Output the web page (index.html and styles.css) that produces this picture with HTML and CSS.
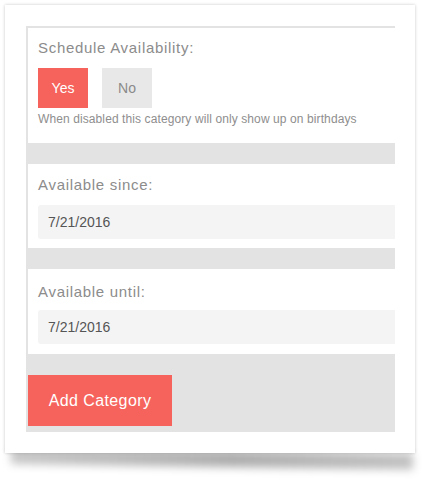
FILE: index.html
```html
<!DOCTYPE html>
<html>
<head>
<meta charset="utf-8">
<link rel="stylesheet" href="styles.css">
</head>
<body>
<div class="stage">
  <div class="card">
    <div class="form">
      <section class="block block-schedule">
        <div class="label">Schedule Availability:</div>
        <div class="toggle">
          <button class="opt opt-on">Yes</button>
          <button class="opt opt-off">No</button>
        </div>
        <div class="hint">When disabled this category will only show up on birthdays</div>
      </section>
      <div class="gap"></div>
      <section class="block block-date">
        <div class="label">Available since:</div>
        <div class="input">7/21/2016</div>
      </section>
      <div class="gap"></div>
      <section class="block block-date block-last">
        <div class="label">Available until:</div>
        <div class="input">7/21/2016</div>
      </section>
      <div class="actions">
        <button class="submit">Add Category</button>
      </div>
    </div>
  </div>
</div>
</body>
</html>
```

FILE: styles.css
```css
html, body {
  margin: 0;
  padding: 0;
  background: #ffffff;
}
body {
  font-family: "Liberation Sans", Arial, sans-serif;
  width: 429px;
  height: 483px;
  overflow: hidden;
}
.stage {
  position: relative;
  z-index: 0;
  padding: 5px 0 0 5px;
}
.card {
  position: relative;
  width: 410px;
  height: 448px;
  box-sizing: border-box;
  background: #ffffff;
  padding: 21px 20px 0 21px;
  box-shadow: 0 0 3px rgba(0,0,0,0.22);
}
.card::after {
  content: "";
  position: absolute;
  left: 6px;
  right: 2px;
  bottom: -11px;
  height: 16px;
  background: linear-gradient(90deg, rgba(0,0,0,0.22), rgba(0,0,0,0.32) 55%, rgba(0,0,0,0.24));
  filter: blur(4px);
  transform: skewY(0.8deg);
  transform-origin: left top;
  z-index: -1;
}
.form {
  background: #e3e3e3;
  padding: 2px 0 6px 2px;
}
.block {
  background: #ffffff;
  padding: 10px 0 16px 10px;
}
.label {
  font-size: 15px;
  line-height: 20px;
  color: #8c8c8c;
  letter-spacing: 0.7px;
}
.toggle {
  display: flex;
  gap: 14px;
  margin-top: 10px;
}
.opt {
  width: 50px;
  height: 40px;
  border: 0;
  padding: 0;
  font-family: inherit;
  font-size: 14px;
}
.opt-on {
  background: #f6635c;
  color: #ffffff;
}
.opt-off {
  background: #e8e8e8;
  color: #8a8a8a;
}
.hint {
  margin-top: 3px;
  font-size: 12px;
  line-height: 16px;
  color: #8e8e8e;
  letter-spacing: 0.1px;
}
.gap {
  height: 21px;
}
.block-date {
  padding: 11px 0 9px 10px;
}
.block-last {
  padding: 13px 0 10px 10px;
}
.input {
  margin-top: 10px;
  height: 34px;
  box-sizing: border-box;
  background: #f4f4f4;
  border-radius: 3px 0 0 3px;
  padding-left: 10px;
  font-size: 14px;
  line-height: 34px;
  color: #555555;
}
.block-last .input {
  margin-top: 8px;
}
.actions {
  padding-top: 21px;
}
.submit {
  display: block;
  width: 144px;
  height: 51px;
  border: 0;
  padding: 0;
  background: #f6635c;
  color: #ffffff;
  font-family: inherit;
  font-size: 16px;
  letter-spacing: 0.4px;
}
```
